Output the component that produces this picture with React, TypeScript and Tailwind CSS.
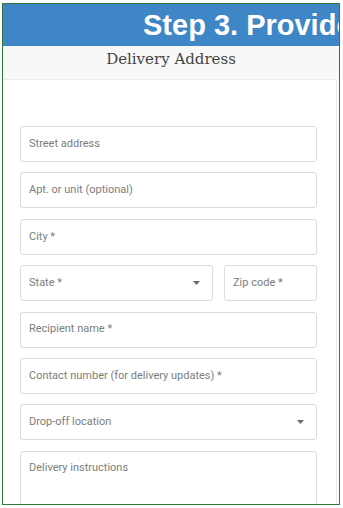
import React from "react";

const Caret = () => (
  <svg width="7" height="4" viewBox="0 0 7 4" className="shrink-0">
    <path d="M0 0 L7 0 L3.5 4 Z" fill="#6b6b6b" />
  </svg>
);

const Field = ({ label, caret, className = "" }: { label: string; caret?: boolean; className?: string }) => (
  <div
    className={`h-[36px] rounded-[3px] border border-[#dcdcdc] bg-white flex items-center justify-between pl-[8px] pr-[12px] ${className}`}
  >
    <span className="text-[11px] text-[#7d7d7d] whitespace-nowrap" style={{ fontFamily: "Roboto, 'Noto Sans', sans-serif" }}>
      {label}
    </span>
    {caret && <Caret />}
  </div>
);

export default function App() {
  return (
    <div className="w-[343px] h-[508px] bg-white overflow-hidden">
      <div className="ml-[2px] mt-[3px] w-[338px] h-[502px] border border-[#2f7a34] overflow-hidden flex flex-col">
        <div className="h-[42px] bg-[#3f86c6] flex items-center pl-[140px] overflow-hidden shrink-0">
          <span
            className="text-white font-bold text-[29px] whitespace-nowrap leading-none"
            style={{ fontFamily: "'Liberation Sans', Arial, sans-serif" }}
          >
            Step 3. Provide delivery details
          </span>
        </div>
        <div className="h-[33px] bg-[#f8f8f8] flex items-center justify-center pb-[6px] shrink-0">
          <span
            className="text-[15px] text-[#444]"
            style={{ fontFamily: "'DejaVu Serif', 'Liberation Serif', serif" }}
          >
            Delivery Address
          </span>
        </div>
        <div className="flex-1 mr-[2px] bg-white border-t border-r border-[#ececec] rounded-tr-[3px] pt-[46px] pl-[17px] pr-[19px] flex flex-col gap-[10.4px]">
          <Field label="Street address" />
          <Field label="Apt. or unit (optional)" />
          <Field label="City *" />
          <div className="flex gap-[11px]">
            <Field label="State *" caret className="w-[193px]" />
            <Field label="Zip code *" className="flex-1" />
          </div>
          <Field label="Recipient name *" />
          <Field label="Contact number (for delivery updates) *" />
          <Field label="Drop-off location" caret />
          <div className="h-[80px] shrink-0 rounded-[3px] border border-[#dcdcdc] bg-white pl-[8px] pt-[9px]">
            <div className="text-[11px] leading-[13px] text-[#7d7d7d]" style={{ fontFamily: "Roboto, 'Noto Sans', sans-serif" }}>
              Delivery instructions
            </div>
          </div>
        </div>
      </div>
    </div>
  );
}
